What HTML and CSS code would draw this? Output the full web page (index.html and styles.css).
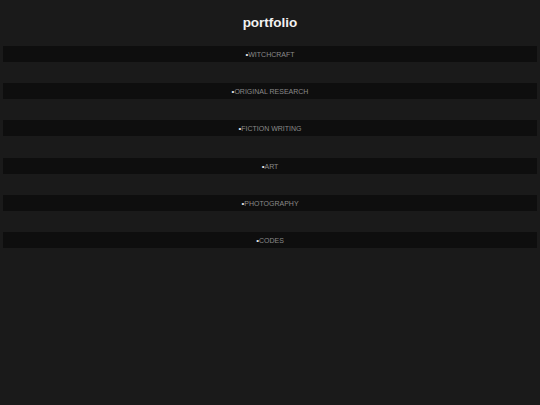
FILE: index.html
```html
<!DOCTYPE html>
<html>
<head>
<meta charset="utf-8">
<link rel="stylesheet" href="styles.css">
</head>
<body>
<header class="top"><h1 class="title">portfolio</h1></header>
<nav class="list">
  <div class="item"><span class="dot">•</span>WITCHCRAFT</div>
  <div class="item"><span class="dot">•</span>ORIGINAL RESEARCH</div>
  <div class="item"><span class="dot">•</span>FICTION WRITING</div>
  <div class="item"><span class="dot">•</span>ART</div>
  <div class="item"><span class="dot">•</span>PHOTOGRAPHY</div>
  <div class="item"><span class="dot">•</span>CODES</div>
</nav>
</body>
</html>
```
FILE: styles.css
```css
html, body {
  margin: 0;
  padding: 0;
  background: #1a1a1a;
  height: 100%;
}
body {
  font-family: "Liberation Sans", Arial, sans-serif;
  padding: 0 3px;
}
.top {
  height: 46px;
  display: flex;
  align-items: center;
  justify-content: center;
}
.title {
  margin: 0;
  font-size: 13.5px;
  font-weight: bold;
  color: #f2f2f2;
  line-height: 1;
  padding-bottom: 1px;
}
.list {
  display: flex;
  flex-direction: column;
  gap: 21.2px;
}
.item {
  height: 16px;
  line-height: 17px;
  background: #0e0e0e;
  text-align: center;
  font-size: 7px;
  color: #8a8a8a;
}
.dot {
  color: #e8e8e8;
  font-size: 8px;
}
```
